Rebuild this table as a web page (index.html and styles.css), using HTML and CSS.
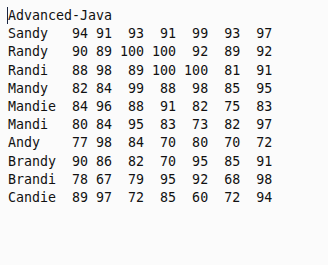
FILE: index.html
```html
<!DOCTYPE html>
<html>
<head>
<meta charset="utf-8">
<link rel="stylesheet" href="styles.css">
</head>
<body>
<pre class="editor"><span class="caret"></span>Advanced-Java
Sandy   94 91  93  91  99  93  97
Randy   90 89 100 100  92  89  92
Randi   88 98  89 100 100  81  91
Mandy   82 84  99  88  98  85  95
Mandie  84 96  88  91  82  75  83
Mandi   80 84  95  83  73  82  97
Andy    77 98  84  70  80  70  72
Brandy  90 86  82  70  95  85  91
Brandi  78 67  79  95  92  68  98
Candie  89 97  72  85  60  72  94</pre>
</body>
</html>
```

FILE: styles.css
```css
html, body {
  margin: 0;
  padding: 0;
  background: #fbfbfb;
}
.editor {
  margin: 0;
  padding: 7px 0 0 8px;
  font-family: "DejaVu Sans Mono", "Liberation Mono", monospace;
  font-size: 13.3px;
  line-height: 18.2px;
  color: #111;
}
.caret {
  display: inline-block;
  width: 1px;
  height: 17px;
  margin-left: -1px;
  background: #1a2540;
  vertical-align: -4px;
}
```
